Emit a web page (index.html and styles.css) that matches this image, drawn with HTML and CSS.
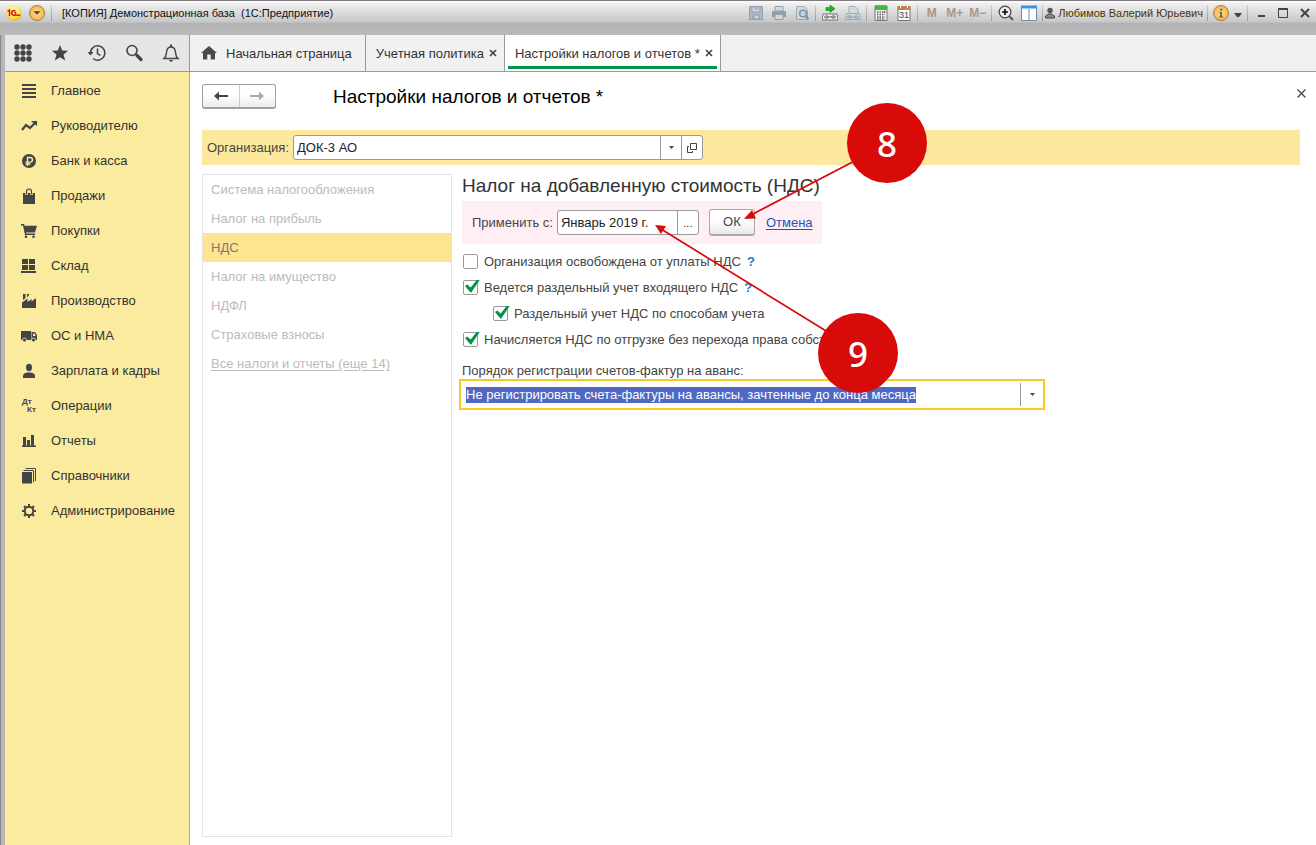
FILE: index.html
```html
<!DOCTYPE html>
<html lang="ru">
<head>
<meta charset="utf-8">
<title>Настройки налогов и отчетов</title>
<link rel="stylesheet" href="styles.css">
</head>
<body>
<header class="titlebar">
  <svg class="logo" viewBox="0 0 16 16"><defs><radialGradient id="sun" cx=".45" cy=".35" r=".7"><stop offset="0" stop-color="#fffde0"/><stop offset=".6" stop-color="#ffe94a"/><stop offset="1" stop-color="#eda51e"/></radialGradient></defs><circle cx="8" cy="8" r="7.8" fill="url(#sun)"/><path d="M1.500 6.500l2-1.500v6M9.500 6.200a2.300 2.300 0 1 0 0 3.500q.5.800 4.700.4M8.300 7.800h2" fill="none" stroke="#d8140c" stroke-width="1.500"/></svg>
  <button class="round" aria-label="Меню"><svg viewBox="0 0 16 16"><path d="M4 6h8l-4 4z" fill="#5a4325"/></svg></button>
  <i class="sep"></i>
  <h1 class="app-title">[КОПИЯ] Демонстрационная база&nbsp; (1С:Предприятие)</h1>
  <div class="sys">
    <button class="ico dim" aria-label="Сохранить"><svg viewBox="0 0 16 16"><path d="M1.500 1.500h13v13h-13z" fill="#a9b7c4" stroke="#8395a6"/><path d="M4 2h8v5H4zM5 10h6v4H5z" fill="#d3d9de" stroke="#8395a6"/><path d="M6 4h5M6 11v3" stroke="#8395a6"/></svg></button>
    <button class="ico dim" aria-label="Печать"><svg viewBox="0 0 16 16"><path d="M4 1.500h8V6H4z" fill="#d5dade" stroke="#8696a5"/><path d="M1 6h14v6H1z" fill="#8696a5"/><path d="M4 9.500h8v5H4z" fill="#d5dade" stroke="#8696a5"/></svg></button>
    <button class="ico dim" aria-label="Просмотр"><svg viewBox="0 0 16 16"><path d="M2.500 1.500h8l3 3v10h-11z" fill="#d0d8de" stroke="#91a2b2"/><circle cx="9" cy="8.500" r="3.300" fill="#c7d5df" stroke="#70899e" stroke-width="1.500"/><path d="M11.500 11l3 3.500" stroke="#70899e" stroke-width="2"/></svg></button>
    <i class="sep"></i>
    <button class="ico" aria-label="Получить ссылку"><svg viewBox="0 0 16 16"><path d="M4 2.500h4V0l5 3.800-5 3.700V5.500H4z" fill="#1fb324" stroke="#168a1b" stroke-width=".6"/><path d="M1 9h14l1 6H0z" fill="#f7f7f7" stroke="#65717b"/><path d="M3 11h3v2H3zM10 11h3v2h-3zM6 12h4" fill="none" stroke="#53606b"/></svg></button>
    <button class="ico dim" aria-label="Перейти по ссылке"><svg viewBox="0 0 16 16"><path d="M4 1.500h6l3 3V9H4z" fill="#d4d9dd" stroke="#93a3b2"/><path d="M1.500 8.500h13l1 6H.5z" fill="#ccd3d9" stroke="#93a3b2"/><path d="M3 11h3v2H3zM10 11h3v2h-3zM6 12h4" fill="none" stroke="#8797a6"/></svg></button>
    <i class="sep"></i>
    <button class="ico" aria-label="Калькулятор"><svg viewBox="0 0 16 16"><path d="M2 1h12v14.500H2z" fill="#f4f4ef" stroke="#777"/><path d="M2 .500h12V5H2z" fill="#40b93e"/><path d="M4 7h8M4 9.500h8M4 12h8M4 14h8" stroke="#59616b" stroke-width="1.300" stroke-dasharray="1.500 1"/><path d="M11 7h1.500" stroke="#d33" stroke-width="1.500"/></svg></button>
    <button class="ico" aria-label="Календарь"><svg viewBox="0 0 16 16"><path d="M2 2h12v13.500H2z" fill="#fbfbf8" stroke="#77736d"/><path d="M1.500 1h13v4h-13z" fill="#c28352"/><path d="M4.500 0v3M11.500 0v3" stroke="#fff"/><text x="8" y="13" class="cal">31</text></svg></button>
    <i class="sep"></i>
    <button class="mem">M</button><button class="mem">M+</button><button class="mem">M−</button>
    <i class="sep"></i>
    <button class="ico" aria-label="Масштаб"><svg viewBox="0 0 16 16"><circle cx="7" cy="7" r="5.800" fill="#eee" stroke="#444" stroke-width="1.200"/><path d="M4 7h6M7 4v6" stroke="#111" stroke-width="1.700"/><path d="M11 11l4 4" stroke="#555" stroke-width="2"/></svg></button>
    <button class="ico" aria-label="Панели"><svg viewBox="0 0 16 16"><path d="M.5 1.500h15v14H.5z" fill="#fff" stroke="#718aa4"/><path d="M0 .500h16v3H0z" fill="#3797e8"/><path d="M8 4v11" stroke="#718aa4"/></svg></button>
    <i class="sep"></i>
    <button class="user"><svg viewBox="0 0 10 12"><circle cx="5" cy="3.500" r="2.700" fill="#555"/><path d="M.5 11V9l3-2h3l3 2v2z" fill="#888" stroke="#444"/></svg>Любимов Валерий Юрьевич</button>
    <i class="sep"></i>
    <button class="round info" aria-label="Справка"><svg viewBox="0 0 16 16"><path d="M7 3h2.500v2H7zM6 6.500h3V12h1.500v1H6v-1h1V7.500H6z" fill="#625f58"/></svg></button>
    <button class="narrow" aria-label="Ещё"><svg viewBox="0 0 8 8"><path d="M0 4h8L5 8H3z" fill="#444"/></svg></button>
    <i class="sep"></i>
    <button class="win" aria-label="Свернуть"><svg viewBox="0 0 12 12"><path d="M3 9h7" stroke="#444" stroke-width="2"/></svg></button>
    <button class="win" aria-label="Развернуть"><svg viewBox="0 0 12 12"><path d="M1.500 2v8.500h9V2" fill="none" stroke="#444"/><path d="M1 2h10" stroke="#444" stroke-width="2"/></svg></button>
    <button class="win" aria-label="Закрыть окно"><svg viewBox="0 0 12 12"><path d="M2 2l8 8M10 2l-8 8" stroke="#444" stroke-width="2"/></svg></button>
  </div>
</header>
<div class="frame">
  <div class="topbar">
    <div class="tools">
      <button aria-label="Разделы"><svg viewBox="0 0 20 20"><g fill="#444"><circle cx="4" cy="4" r="2.700"/><circle cx="10" cy="4" r="2.700"/><circle cx="16" cy="4" r="2.700"/><circle cx="4" cy="10" r="2.700"/><circle cx="10" cy="10" r="2.700"/><circle cx="16" cy="10" r="2.700"/><circle cx="4" cy="16" r="2.700"/><circle cx="10" cy="16" r="2.700"/><circle cx="16" cy="16" r="2.700"/></g></svg></button>
      <button aria-label="Избранное"><svg viewBox="0 0 20 20"><path d="M10 2l2.200 5.600 6 .2-4.700 3.800 1.700 5.900L10 14.200l-5.200 3.300 1.700-5.900L1.800 7.800l6-.2z" fill="#444"/></svg></button>
      <button aria-label="История"><svg viewBox="0 0 20 20"><path d="M3.500 10a7.200 7.200 0 1 1 2.600 5.500M10.500 5.500v5l3 2" fill="none" stroke="#444" stroke-width="1.500"/><path d="M.5 9h6l-3 3.500z" fill="#444"/></svg></button>
      <button aria-label="Поиск"><svg viewBox="0 0 20 20"><circle cx="8" cy="7.500" r="5" fill="none" stroke="#444" stroke-width="1.600"/><path d="M11.500 11l1.500 1" stroke="#444" stroke-width="2"/><path d="M13 12.500l4 4" stroke="#444" stroke-width="3.200" stroke-linecap="round"/></svg></button>
      <button aria-label="Уведомления"><svg viewBox="0 0 20 20"><path d="M3 15.500c3-2.500 2-5 2.800-8Q6.800 4 10 4t4.200 3.500c.8 3-.2 5.500 2.800 8z" fill="none" stroke="#444" stroke-width="1.400"/><path d="M9 1.500h2V4H9zM7.500 17h5l-2.500 2z" fill="#444"/></svg></button>
    </div>
    <nav class="tabs" aria-label="Открытые окна">
      <div class="tab home"><svg viewBox="0 0 16 14"><path d="M8 0l8 7h-2v6.500H9.700V8.500H6.300v5H2V7H0z" fill="#4a4a4a"/></svg><a href="#">Начальная страница</a></div>
      <div class="tab"><a href="#">Учетная политика</a><button class="x" aria-label="Закрыть"><svg viewBox="0 0 8 8"><path d="M1 1l6 6M7 1L1 7" stroke="#444" stroke-width="1.700"/></svg></button></div>
      <div class="tab active"><a href="#">Настройки налогов и отчетов *</a><button class="x" aria-label="Закрыть"><svg viewBox="0 0 8 8"><path d="M1 1l6 6M7 1L1 7" stroke="#444" stroke-width="1.700"/></svg></button></div>
    </nav>
  </div>
  <div class="work">
    <nav class="menu" aria-label="Разделы">
      <a href="#"><svg viewBox="0 0 16 16"><path d="M1 2h14M1 6h14M1 10h14M1 14h14" stroke="#444" stroke-width="2"/></svg>Главное</a>
      <a href="#"><svg viewBox="0 0 16 16"><path d="M1 12l4-5 4 3 5-5" fill="none" stroke="#444" stroke-width="2.200"/><path d="M10 3h6v5z" fill="#444"/></svg>Руководителю</a>
      <a href="#"><svg viewBox="0 0 16 16"><circle cx="8" cy="8" r="7" fill="#444"/><path d="M6.500 13V4.500h2.700a2.300 2.300 0 0 1 0 4.600H4.500M4.500 11h5" fill="none" stroke="#faeb9e" stroke-width="1.400"/></svg>Банк и касса</a>
      <a href="#"><svg viewBox="0 0 16 16"><path d="M2 5h12v11H2z" fill="#444"/><path d="M5.500 7V3.500Q5.500 1 8 1t2.500 2.500V7" fill="none" stroke="#faeb9e" stroke-width="2.600"/><path d="M5.500 6.500v-3Q5.500 1 8 1t2.500 2.500v3" fill="none" stroke="#444" stroke-width="1.200"/></svg>Продажи</a>
      <a href="#"><svg viewBox="0 0 16 16"><path d="M0 1h3l.6 1.800H16L14 9.500H5l.3 1H14V12H4L2 2.500H0z" fill="#444"/><circle cx="5" cy="13.800" r="1.300" fill="#444"/><circle cx="12.500" cy="13.800" r="1.300" fill="#444"/></svg>Покупки</a>
      <a href="#"><svg viewBox="0 0 16 16"><path d="M1 1h6v5H1zM8 1h6v5H8zM1 7h6v5H1zM8 7h6v5H8zM0 13h15v2H0z" fill="#444"/></svg>Склад</a>
      <a href="#"><svg viewBox="0 0 16 16"><path d="M1 15V9.500l5.500-4V9l4-3v2.500L15 5v10zM2 1h2.500v4L2 7zM6 1h2.500L7 3.500l-1 .8z" fill="#444"/></svg>Производство</a>
      <a href="#"><svg viewBox="0 0 16 16"><path d="M0 3h10v9H0zM10.500 4H14l2 3v5h-5.500z" fill="#444"/><path d="M12 5.500h1.700l1 2.500H12z" fill="#faeb9e"/><circle cx="3.500" cy="12" r="2" fill="#444" stroke="#faeb9e" stroke-width=".8"/><circle cx="12.500" cy="12" r="2" fill="#444" stroke="#faeb9e" stroke-width=".8"/></svg>ОС и НМА</a>
      <a href="#"><svg viewBox="0 0 16 16"><ellipse cx="8" cy="4.500" rx="3" ry="3.700" fill="#444"/><path d="M2 15v-2.500Q2.500 10 6 9.500h4q3.500.5 4 3V15z" fill="#444"/></svg>Зарплата и кадры</a>
      <a href="#"><svg viewBox="0 0 16 16"><text x="1" y="6" class="dk">Дт</text><text x="6" y="14" class="dk">Кт</text></svg>Операции</a>
      <a href="#"><svg viewBox="0 0 16 16"><path d="M2 4h3v9H2zM6 7h3v6H6zM10 2h3v11h-3zM1 12.500h14V14H1z" fill="#444"/></svg>Отчеты</a>
      <a href="#"><svg viewBox="0 0 16 16"><path d="M1 4h10v11.500H1z" fill="#444"/><path d="M2.500 2.500h10v12M4.500.500h10V13" fill="none" stroke="#444"/></svg>Справочники</a>
      <a href="#"><svg viewBox="0 0 16 16"><circle cx="8" cy="8" r="4.300" fill="none" stroke="#444" stroke-width="2"/><path d="M8 1v2.500M8 12.500V15M1 8h2.500M12.500 8H15M3 3l2 2M11 11l2 2M13 3l-2 2M5 11l-2 2" stroke="#444" stroke-width="2"/></svg>Администрирование</a>
    </nav>
    <main class="page">
      <div class="head">
        <div class="navs">
          <button aria-label="Назад"><svg viewBox="0 0 14 10"><path d="M0 5l5-4.500V4h9v2H5v3.500z" fill="#444"/></svg></button>
          <button aria-label="Вперед" disabled><svg viewBox="0 0 14 10"><path d="M14 5L9 .500V4H0v2h9v3.500z" fill="#aaa"/></svg></button>
        </div>
        <h2 class="title">Настройки налогов и отчетов *</h2>
        <button class="close" aria-label="Закрыть"><svg viewBox="0 0 8 8"><path d="M.5.500l7 7M7.500.500l-7 7" stroke="#444" stroke-width="1.100"/></svg></button>
      </div>
      <div class="org">
        <label for="org">Организация:</label>
        <div class="field orgfield">
          <select id="org"><option>ДОК-3 АО</option></select>
          <span class="drop"><svg viewBox="0 0 5 3"><path d="M0 0h5L2.500 3z" fill="#444"/></svg></span>
          <button aria-label="Открыть"><svg class="open" viewBox="0 0 10 10"><path d="M3.500.500h6v6h-6zM2 3.500H.5v6h5V8" fill="none" stroke="#444"/></svg></button>
        </div>
      </div>
      <div class="body">
        <nav class="taxes" aria-label="Налоги">
          <a href="#">Система налогообложения</a>
          <a href="#">Налог на прибыль</a>
          <a href="#" class="current">НДС</a>
          <a href="#">Налог на имущество</a>
          <a href="#">НДФЛ</a>
          <a href="#">Страховые взносы</a>
          <a href="#" class="all">Все налоги и отчеты (еще 14)</a>
        </nav>
        <section class="form">
          <h3 class="subtitle">Налог на добавленную стоимость (НДС)</h3>
          <div class="apply">
            <label for="from">Применить с:</label>
            <div class="field date"><input id="from" type="text" value="Январь 2019 г."><button class="pick">...</button></div>
            <button class="ok">ОК</button>
            <a href="#" class="cancel">Отмена</a>
          </div>
          <div class="checks">
            <div class="check"><input type="checkbox" id="c1"><label for="c1">Организация освобождена от уплаты НДС</label><a href="#">?</a></div>
            <div class="check"><input type="checkbox" id="c2" checked><label for="c2">Ведется раздельный учет входящего НДС</label><a href="#">?</a></div>
            <div class="check nested"><input type="checkbox" id="c3" checked><label for="c3">Раздельный учет НДС по способам учета</label></div>
            <div class="check"><input type="checkbox" id="c4" checked><label for="c4">Начисляется НДС по отгрузке без перехода права собст</label></div>
          </div>
          <label class="caption" for="mode">Порядок регистрации счетов-фактур на аванс:</label>
          <div class="mode">
            <select id="mode"><option>Не регистрировать счета-фактуры на авансы, зачтенные до конца месяца</option></select>
            <button aria-label="Выбрать"><svg viewBox="0 0 5 3"><path d="M0 0h5L2.500 3z" fill="#444"/></svg></button>
          </div>
        </section>
      </div>
    </main>
  </div>
</div>
<svg class="arrows" viewBox="0 0 300 250"><g stroke="#d80a0a" stroke-width="1.700"><path d="M225 55L110 115M190 234L20 129"/></g><path d="M103 119l8-9 4 8.500zM14 125l11 1-5 8z" fill="#d80a0a"/></svg>
<div class="badge eight">8</div>
<div class="badge nine">9</div>
</body>
</html>
```

FILE: styles.css
```css
* { box-sizing: border-box; }
body {
  margin: 0;
  min-height: 100vh;
  position: relative;
  display: flex;
  flex-direction: column;
  background: #fff;
  color: #333;
  font: 13px/16px "Liberation Sans", Arial, sans-serif;
}
button, select, input { font: inherit; color: inherit; margin: 0; }
button, select { padding: 0; border: 0; background: none; }
button { display: flex; align-items: center; justify-content: center; }
svg { display: block; flex: none; }
a { color: inherit; text-decoration: none; }
h1, h2, h3 { margin: 0; font-weight: normal; }

/* window title */
.titlebar {
  height: 35px;
  padding: 2px 0 12px 6px;
  display: flex;
  align-items: center;
  border-top: 1px solid #807b80;
  background: linear-gradient(#fff 0, #eee 3px, #c6c7c9 21px, #b4b4b6 22px, #bbb 34px);
  font-size: 11px;
  line-height: 14px;
  color: #111;
}
.logo { width: 16px; height: 16px; }
.round {
  width: 16px;
  height: 16px;
  margin-left: 7px;
  border: 1px solid #a87b36;
  border-radius: 50%;
  background: radial-gradient(#ffdc8a, #f2a941);
}
.round svg { width: 14px; height: 14px; }
.sep { width: 1px; height: 16px; margin: 0 2px; background: linear-gradient(#ccc, #999); }
.titlebar > .sep { margin: 0 10px 0 6px; }
.app-title { font-size: 11px; white-space: nowrap; }
.sys { margin-left: auto; display: flex; align-items: center; }
.ico { width: 23px; height: 20px; }
.ico svg { width: 16px; height: 16px; }
.dim { opacity: .85; }
.cal { font: 9px "Liberation Sans", Arial, sans-serif; text-anchor: middle; fill: #444; }
.mem { width: 23px; font-size: 12px; font-weight: bold; color: #a8978b; }
.user { gap: 3px; margin-right: 2px; color: #4a3508; white-space: nowrap; }
.user svg { width: 10px; height: 12px; }
.round.info { margin-left: 3px; }
.narrow { width: 14px; margin-left: 2px; }
.narrow svg { width: 8px; height: 8px; }
.win { width: 22px; }
.win svg { width: 12px; height: 12px; }

/* frame, sections and tabs */
.frame {
  flex: 1;
  display: flex;
  flex-direction: column;
  padding-left: 5px;
  background: linear-gradient(90deg, #8a868a 1px, #b8b5b8 1px);
}
.topbar {
  height: 37px;
  display: flex;
  border-bottom: 1px solid #999;
  background: #f1f1f1;
}
.tools {
  width: 185px;
  display: flex;
  justify-content: space-between;
  padding: 0 8px;
  background: #e6e6e6;
  border-right: 1px solid #999;
}
.tools svg { width: 20px; height: 20px; }
.tabs { display: flex; }
.tab {
  display: flex;
  align-items: center;
  gap: 5px;
  padding: 0 7px 0 10px;
  border-right: 1px solid #999;
  white-space: nowrap;
}
.tab a { padding-top: 2px; }
.tab.home { gap: 9px; padding: 0 13px 0 11px; }
.home svg { width: 16px; height: 14px; }
.tab.active {
  background: linear-gradient(#009646, #009646) center bottom 2px / calc(100% - 6px) 3px no-repeat #fff;
}
.x svg { width: 8px; height: 8px; }
.work { flex: 1; display: flex; background: #fff; }
.menu { width: 185px; padding-top: 1px; background: #faeb9e; border-right: 1px solid #b4b08a; }
.menu a { display: flex; align-items: center; gap: 14px; height: 35px; padding-left: 16px; }
.menu svg { width: 16px; height: 16px; }
.dk { font: bold 8px "Liberation Sans", Arial, sans-serif; fill: #444; }

/* page */
.page { flex: 1; display: flex; flex-direction: column; padding: 12px 16px 8px 12px; }
.head { display: flex; align-items: center; height: 25px; margin-bottom: 21px; color: #000; }
.navs {
  display: flex;
  width: 74px;
  height: 25px;
  border: 1px solid #a0a0a0;
  border-bottom-width: 2px;
  border-radius: 3px;
  background: linear-gradient(#fff 40%, #ececec);
}
.navs button { flex: 1; }
.navs button + button { border-left: 1px solid #ccc; }
.navs svg { width: 14px; height: 10px; }
.title { margin-left: 57px; font-size: 19px; line-height: 24px; }
.close { margin: 0 -6px 6px auto; }
.close svg { width: 9px; height: 9px; }
.org {
  height: 35px;
  display: flex;
  align-items: center;
  gap: 4px;
  padding-left: 5px;
  background: #fce99d;
  color: #444;
}
.field {
  display: flex;
  height: 25px;
  border: 1px solid #999;
  border-radius: 3px;
  background: #fff;
  color: #222;
}
.field select, .field input {
  appearance: none;
  flex: 1;
  min-width: 0;
  padding: 0 3px;
  border: 0;
  outline: 0;
  background: none;
}
.field button { width: 21px; border-left: 1px solid #999; }
.field .pick { font-size: 11px; }
.drop { width: 21px; display: flex; align-items: center; justify-content: center; border-left: 1px solid #999; }
.drop svg, .mode button svg { width: 5px; height: 3px; }
.open { width: 10px; height: 10px; }
.orgfield { width: 410px; }
.body { flex: 1; display: flex; gap: 10px; margin-top: 9px; }
.taxes { width: 250px; border: 1px solid #e2e2e2; color: #bbb; }
.taxes a { display: block; padding: 0 8px; line-height: 29px; }
.taxes .current { background: #ffe48f; color: #777; }
.taxes .all { text-decoration: underline; text-underline-offset: 2px; }
.form { flex: 1; color: #444; }
.subtitle { font-size: 19px; line-height: 24px; margin-bottom: 3px; color: #333; }
.apply {
  width: 360px;
  height: 43px;
  display: flex;
  align-items: center;
  padding-left: 10px;
  background: #ffeff4;
}
.date { width: 142px; margin: 0 10px 0 4px; }
.ok {
  width: 46px;
  height: 27px;
  border: 1px solid #aaa;
  border-bottom-width: 2px;
  border-radius: 3px;
  background: linear-gradient(#fff 40%, #e8e8e8);
}
.cancel { margin-left: 11px; color: #2255bb; text-decoration: underline; text-underline-offset: 2px; }
.checks { padding-top: 4px; }
.check { display: flex; align-items: center; height: 26px; padding-left: 1px; white-space: nowrap; }
.check label, .check a { padding-top: 2px; }
.check input {
  appearance: none;
  width: 15px;
  height: 15px;
  margin-right: 6px;
  border: 1px solid #999;
  border-radius: 2px;
  background: #fff;
}
.check input:checked::after {
  content: "";
  display: block;
  width: 15px;
  height: 13px;
  margin: -1px 0 0 1px;
  background: #009646;
  clip-path: polygon(0 50%, 15% 38%, 38% 62%, 80% 0, 100% 0, 42% 100%, 36% 100%);
}
.check.nested { padding-left: 31px; }
.check a { margin-left: 6px; color: #1a7abf; font-weight: bold; }
.caption { display: block; margin: 11px 0 0; }
.mode {
  width: 586px;
  height: 31px;
  display: flex;
  align-items: center;
  margin-left: -3px;
  padding-left: 5px;
  border: 2px solid #fbca20;
  background: #fff;
}
.mode select { appearance: none; height: 16px; background: #5068c4; color: #fff; }
.mode button { width: 23px; height: 23px; margin-left: auto; border-left: 1px solid #999; }

/* callouts over the form */
.arrows { position: absolute; left: 641px; top: 100px; width: 300px; height: 250px; pointer-events: none; }
.badge {
  position: absolute;
  width: 80px;
  height: 80px;
  border-radius: 50%;
  background: #d80a0a;
  color: #fff;
  font: 500 35px/82px "Noto Sans", "Open Sans", sans-serif;
  text-align: center;
}
.eight { left: 847px; top: 103px; }
.nine { left: 818px; top: 313px; clip-path: polygon(0 0, 100% 0, 100% 60%, 96% 73%, 80% 90%, 80% 100%, 0 100%); }
```
